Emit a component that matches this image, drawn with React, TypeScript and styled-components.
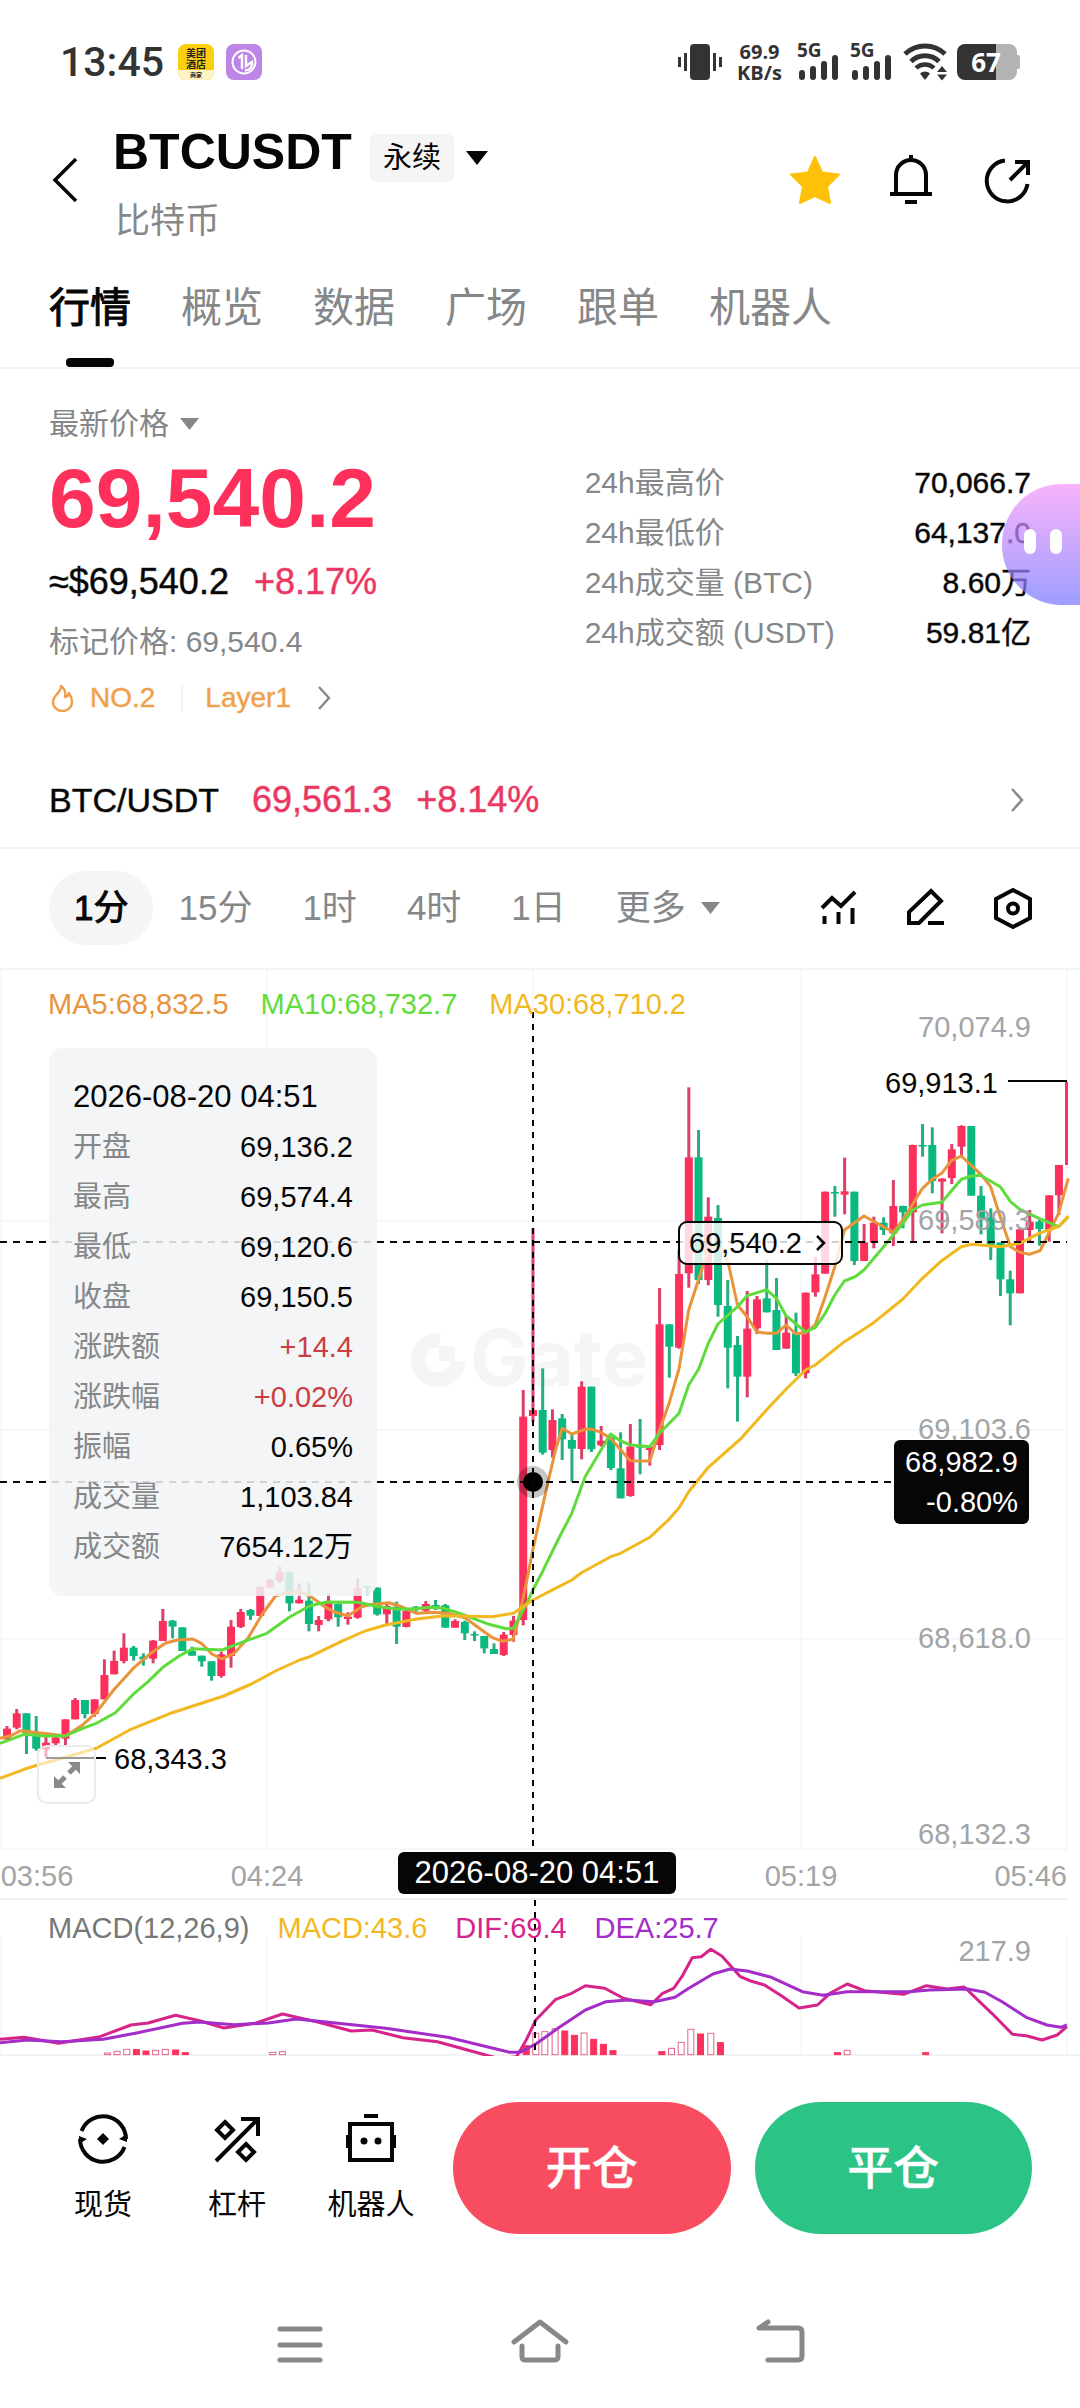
import React from "react";
import styled, { createGlobalStyle } from "styled-components";

const color = {
  ink: "#060606",
  muted: "#858789",
  axis: "#a2a4a6",
  line: "#f4f5f6",
  up: "#fb305c",
  upText: "#ea3762",
  down: "#09b97f",
  orange: "#f0a04b",
  ma5: "#e9933a",
  ma10: "#5fdc3c",
  ma30: "#f2b81f",
  dif: "#d6248a",
  dea: "#a42cc8",
};

// a medium weight, between the regular and bold faces of the font
const mediumStroke = "-webkit-text-stroke: 1px color-mix(in srgb, currentColor 45%, transparent);";

const GlobalStyle = createGlobalStyle`
  * { box-sizing: border-box; }
  body { margin: 0; background: #fff; }
  button { border: 0; padding: 0; margin: 0; background: none; color: inherit; font: inherit; cursor: pointer; }
  svg { display: block; }
`;

const Page = styled.div`
  font-family: "Liberation Sans", "Noto Sans CJK SC", sans-serif;
  color: ${color.ink};
  background: #fff;
`;

/* ---------- status bar ---------- */
const StatusBar = styled.div`
  display: flex;
  align-items: center;
  justify-content: space-between;
  padding: 38px 60px 0 60px;
  height: 86px;
  color: #333;
`;
const StatusGroup = styled.div<{ $gap: number }>`
  display: flex;
  align-items: center;
  gap: ${(p) => p.$gap}px;
`;
const Clock = styled.time`
  font: 500 41px/48px Roboto, sans-serif;
  margin-right: 2px;
`;
const NetSpeed = styled.div`
  display: flex;
  flex-direction: column;
  align-items: center;
  font: 700 20px/21px "Open Sans", sans-serif;
`;

/* ---------- header ---------- */
const Header = styled.header`
  display: flex;
  align-items: center;
  padding: 36px 46px 0 49px;
`;
const BackButton = styled.button`
  width: 32px;
  margin-right: 32px;
`;
const TitleBlock = styled.div`
  flex: 1;
`;
const TitleRow = styled.div`
  display: flex;
  align-items: flex-end;
`;
const Title = styled.h1`
  margin: 0 18px 0 0;
  font-size: 50px;
  line-height: 60px;
  font-weight: 700;
`;
const ContractTag = styled.span`
  padding: 0 13px;
  margin-right: 12px;
  border-radius: 6px;
  background: #f5f5f5;
  font-size: 29px;
  line-height: 48px;
`;
const Subtitle = styled.div`
  margin: 20px 0 0 2px;
  font-size: 35px;
  line-height: 38px;
  color: ${color.muted};
`;
const HeaderActions = styled.div`
  display: flex;
  gap: 42px;
`;

/* ---------- tabs ---------- */
const Tabs = styled.nav`
  display: flex;
  gap: 50px;
  padding: 43px 49px 0;
  border-bottom: 2px solid ${color.line};
`;
const Tab = styled.button<{ $active?: boolean }>`
  position: relative;
  padding-bottom: 34px;
  font-size: 41px;
  line-height: 50px;
  color: ${(p) => (p.$active ? color.ink : color.muted)};
  ${(p) => (p.$active ? "-webkit-text-stroke: 1px currentColor;" : "")}
  &::after {
    content: "";
    display: ${(p) => (p.$active ? "block" : "none")};
    position: absolute;
    left: calc(50% - 24px);
    bottom: 0;
    width: 48px;
    height: 9px;
    border-radius: 4px;
    background: ${color.ink};
  }
`;

/* ---------- price summary ---------- */
const Summary = styled.section`
  position: relative;
  display: grid;
  grid-template-columns: 6fr 5fr;
  padding: 30px 49px 0;
`;
const PriceColumn = styled.div`
  display: flex;
  flex-direction: column;
  align-items: flex-start;
`;
const PriceKind = styled.button`
  display: flex;
  align-items: center;
  gap: 11px;
  font-size: 30px;
  line-height: 50px;
  color: ${color.muted};
`;
const LastPrice = styled.div`
  font-size: 84px;
  line-height: 98px;
  font-weight: 700;
  color: #fd2f5b;
`;
const Medium = styled.span<{ $size: number; $tone?: string }>`
  display: block;
  font-size: ${(p) => p.$size}px;
  color: ${(p) => p.$tone || color.ink};
  ${mediumStroke}
`;
const FiatRow = styled.div`
  display: flex;
  gap: 25px;
  line-height: 70px;
`;
const MarkPrice = styled.div`
  font-size: 30px;
  line-height: 50px;
  color: ${color.muted};
`;
const Badges = styled.div`
  display: flex;
  align-items: center;
  line-height: 62px;
`;
const BadgeLink = styled.a`
  display: flex;
  align-items: center;
  gap: 13px;
  color: inherit;
  text-decoration: none;
`;
const BadgeDivider = styled.span`
  width: 2px;
  height: 28px;
  margin: 0 22px 0 26px;
  background: ${color.line};
`;
const Stats = styled.dl`
  margin: 0;
  padding-top: 59px;
`;
const StatRow = styled.div`
  display: flex;
  justify-content: space-between;
  font-size: 30px;
  line-height: 50px;
`;
const StatLabel = styled.dt`
  color: ${color.muted};
`;
const StatValue = styled.dd`
  margin: 0;
`;
const Assistant = styled.button`
  position: absolute;
  right: 0;
  top: 115px;
  width: 78px;
  height: 121px;
  display: flex;
  align-items: center;
  gap: 14px;
  padding: 0 0 6px 22px;
  border-radius: 60px 0 0 60px;
  background: linear-gradient(rgba(245, 150, 250, 0.72), rgba(120, 120, 255, 0.72));
`;
const Eye = styled.span`
  width: 12px;
  height: 25px;
  border-radius: 6px;
  background: #fff;
`;

const SpotLink = styled.a`
  display: flex;
  align-items: center;
  padding: 48px 56px 24px 49px;
  border-bottom: 2px solid ${color.line};
  line-height: 46px;
  color: inherit;
  text-decoration: none;
`;
const SpotName = styled.span`
  margin-right: 33px;
`;
const SpotPrice = styled.span`
  margin-right: 24px;
`;
const Spacer = styled.span`
  flex: 1;
`;

/* ---------- interval bar ---------- */
const IntervalBar = styled.div`
  display: flex;
  align-items: center;
  justify-content: space-between;
  padding: 22px 45px 23px 49px;
  border-bottom: 2px solid ${color.line};
`;
const Intervals = styled.div`
  display: flex;
`;
const Interval = styled.button<{ $active?: boolean }>`
  display: flex;
  align-items: center;
  gap: 15px;
  padding: 0 25px;
  border-radius: 37px;
  font-size: 35px;
  line-height: 74px;
  color: ${(p) => (p.$active ? color.ink : color.muted)};
  background: ${(p) => (p.$active ? "#f5f5f5" : "transparent")};
  ${(p) => (p.$active ? "-webkit-text-stroke: 1px currentColor;" : "")}
`;
const ChartTools = styled.div`
  display: flex;
  gap: 43px;
`;

/* ---------- chart ---------- */
const Chart = styled.section`
  position: relative;
`;
const ChartSvg = styled.svg`
  width: 100%;
  height: auto;
  font-family: "Liberation Sans", sans-serif;
  font-size: 29px;
`;
const Legend = styled.div<{ $top: number; $gap: number }>`
  position: absolute;
  top: ${(p) => p.$top}px;
  left: 48px;
  display: flex;
  gap: ${(p) => p.$gap}px;
  font-size: 29px;
  line-height: 34px;
`;
const LegendItem = styled.span<{ $tone: string }>`
  color: ${(p) => p.$tone};
`;
const Tooltip = styled.dl`
  position: absolute;
  top: 78px;
  left: 49px;
  width: 328px;
  margin: 0;
  padding: 24px;
  border-radius: 14px;
  background: rgba(241, 243, 245, 0.86);
  font-size: 29px;
  line-height: 50px;
`;
const TooltipDate = styled.div`
  font-size: 31px;
`;
const TooltipRow = styled.div`
  display: flex;
  justify-content: space-between;
`;
const TooltipLabel = styled.dt`
  color: ${color.muted};
`;
const TooltipValue = styled.dd<{ $rise?: boolean }>`
  margin: 0;
  color: ${(p) => (p.$rise ? "#cb3d42" : color.ink)};
`;
const PriceTag = styled.button`
  position: absolute;
  top: 251px;
  left: 678px;
  height: 44px;
  display: flex;
  align-items: center;
  gap: 14px;
  padding: 0 15px 0 9px;
  border: 2px solid ${color.ink};
  border-radius: 9px;
  background: rgba(255, 255, 255, 0.82);
  font-size: 29px;
`;
const CrossPrice = styled.div`
  position: absolute;
  top: 470px;
  right: 51px;
  padding: 2px 11px;
  border-radius: 6px;
  background: ${color.ink};
  color: #fff;
  font-size: 29px;
  line-height: 40px;
  text-align: right;
`;
const CrossTime = styled.div`
  position: absolute;
  top: 882px;
  left: 398px;
  width: 278px;
  border-radius: 6px;
  background: ${color.ink};
  color: #fff;
  font-size: 31px;
  line-height: 42px;
  text-align: center;
`;
const ExpandButton = styled.button`
  position: absolute;
  top: 775px;
  left: 37px;
  width: 59px;
  height: 59px;
  display: grid;
  place-items: center;
  border: 2px solid #ebebeb;
  border-radius: 10px;
  background: rgba(255, 255, 255, 0.6);
`;

/* ---------- bottom ---------- */
const ActionBar = styled.footer`
  display: flex;
  align-items: center;
  padding: 46px 48px 0 36px;
`;
const Shortcut = styled.button`
  width: 134px;
  display: flex;
  flex-direction: column;
  align-items: center;
  gap: 20px;
  font-size: 29px;
  line-height: 38px;
`;
const TradeButtons = styled.div`
  flex: 1;
  display: flex;
  gap: 24px;
  margin-left: 15px;
`;
const TradeButton = styled.button<{ $bg: string }>`
  flex: 1;
  border-radius: 66px;
  background: ${(p) => p.$bg};
  color: #fff;
  font-size: 46px;
  line-height: 132px;
  font-weight: 500;
  ${mediumStroke}
`;
const SystemNav = styled.nav`
  display: flex;
  justify-content: center;
  gap: 180px;
  padding: 81px 0 33px;
`;

/* ---------- icons ---------- */
const Caret = ({ w, h, box = h, fill }: { w: number; h: number; box?: number; fill: string }) => (
  <svg width={w} height={box} viewBox={`0 ${-(box - h) / 2} ${w} ${box}`}>
    <path d={`M0 0H${w}L${w / 2} ${h}Z`} fill={fill} />
  </svg>
);
const ChevronRight = () => (
  <svg width="14" height="24" viewBox="0 0 14 24" fill="none" stroke={color.muted} strokeWidth="2.4">
    <path d="M2 1L12 12L2 23" />
  </svg>
);
const SignalIcon = () => (
  <svg width="43" height="54" viewBox="0 -8 43 54" fill="#333">
    <text x="0" y="14" fontFamily="Open Sans, sans-serif" fontWeight="700" fontSize="19">5G</text>
    <rect x="2" y="27" width="6" height="10" rx="3" />
    <rect x="13" y="23" width="6" height="14" rx="3" />
    <rect x="24" y="18" width="6" height="19" rx="3" />
    <rect x="35" y="12" width="6" height="25" rx="3" />
  </svg>
);

/* ---------- chart data ---------- */
type Point = [number, number];
type Block = { x: number; y: number; kx: number; pts: Point[] };
const KA = 1 / 2.904;
const KB = 1 / 2.703;
const toPath = (blocks: Block[]) =>
  blocks
    .flatMap((b) => b.pts.map(([px, py]) => `${(b.x + px * b.kx).toFixed(1)} ${(b.y + py / 3).toFixed(1)}`))
    .map((s, i) => (i ? "L" : "M") + s)
    .join("");

const MA5 = toPath([
  { x: 0, y: 1500, kx: KA, pts: [[0,715],[30,708],[60,692],[100,697],[150,703],[190,708],[240,675],[280,637],[330,570],[390,502],[440,458],[480,430],[515,420],[560,417],[585,430],[615,462],[645,477],[680,460],[720,415],[760,345],[800,288],[830,278],[870,275],[900,288],[940,318],[970,335],[1010,348],[1050,320],[1080,313],[1130,308],[1160,318],[1210,340],[1260,337],[1300,340],[1350,353],[1390,383],[1430,413],[1460,424],[1490,418],[1505,360],[1530,240]] },
  { x: 500, y: 1050, kx: KB, pts: [[89,1498],[115,1370],[131,1290],[150,1200],[168,1135],[194,1152],[230,1138],[250,1138],[275,1148],[299,1165],[352,1232],[405,1233],[431,1140],[457,1060],[484,955],[510,780],[545,660],[565,590],[600,600],[617,640],[642,765],[668,800],[694,845],[720,850],[747,850],[773,825],[799,851],[826,848],[852,825],[879,740],[905,650],[931,540],[984,498],[1063,547],[1089,510],[1142,415],[1168,388],[1194,370],[1220,332],[1247,318],[1300,373],[1326,410],[1352,500],[1380,590],[1405,607],[1431,613],[1460,602],[1510,490],[1536,385]] },
]);
const MA10 = toPath([
  { x: 0, y: 1500, kx: KA, pts: [[0,730],[70,703],[130,708],[190,708],[240,685],[280,670],[335,638],[390,580],[430,545],[475,500],[520,468],[560,446],[645,450],[700,428],[775,400],[840,352],[900,317],[950,306],[1040,307],[1100,320],[1150,327],[1200,327],[1250,322],[1290,325],[1340,342],[1420,373],[1470,386],[1491,385],[1530,310]] },
  { x: 500, y: 1400, kx: KB, pts: [[89,570],[115,515],[150,435]] },
  { x: 500, y: 1050, kx: KB, pts: [[168,1445],[194,1390],[230,1280],[299,1152],[325,1172],[352,1185],[405,1190],[431,1150],[484,1090],[510,1005],[537,957],[563,880],[589,822],[642,770],[668,737],[720,719],[747,745],[773,797],[826,846],[852,833],[879,790],[905,735],[931,693],[960,680],[984,660],[1037,590],[1089,520],[1115,480],[1142,465],[1194,457],[1247,388],[1275,378],[1299,376],[1352,410],[1380,455],[1405,478],[1457,505],[1510,530],[1536,500]] },
]);
const MA30 = toPath([
  { x: 0, y: 1500, kx: KA, pts: [[0,835],[70,808],[110,795],[170,778],[280,745],[380,688],[500,638],[650,588],[730,552],[800,513],[870,480],[900,470],[990,425],[1060,393],[1120,375],[1210,357],[1290,347],[1430,350],[1491,340]] },
  { x: 500, y: 1400, kx: KB, pts: [[89,600],[150,565],[194,540],[220,518],[299,470],[326,460],[405,412],[457,358],[484,323],[510,275],[563,202],[650,117]] },
  { x: 500, y: 1050, kx: KB, pts: [[720,1080],[773,1018],[826,960],[852,945],[931,875],[1010,818],[1089,747],[1142,685],[1194,632],[1247,590],[1275,583],[1352,590],[1405,580],[1457,550],[1510,530],[1536,498]] },
]);
const KM = 1 / 1.4519;
const DIF = toPath([{ x: 0, y: 1880, kx: KM, pts: [[0,478],[35,472],[85,490],[145,470],[190,435],[215,429],[255,406],[290,422],[325,444],[370,430],[410,402],[460,425],[510,453],[540,450],[585,473],[635,485],[700,522],[725,536],[750,530],[764,480],[778,420],[807,358],[830,340],[850,317],[878,325],[905,355],[945,374],[962,340],[978,325],[990,290],[1005,233],[1018,230],[1032,208],[1048,228],[1075,290],[1090,303],[1110,315],[1135,348],[1160,384],[1187,375],[1205,340],[1230,312],[1255,332],[1312,343],[1345,317],[1375,327],[1400,321],[1440,400],[1470,463],[1490,467],[1513,480],[1535,465],[1549,440]] }]);
const DEA = toPath([{ x: 0, y: 1880, kx: KM, pts: [[0,488],[40,480],[90,485],[150,478],[200,458],[265,430],[290,426],[340,434],[390,429],[430,417],[470,425],[560,445],[650,472],[740,517],[755,517],[778,492],[810,445],[850,390],[880,365],[910,360],[950,365],[980,352],[1000,325],[1035,282],[1060,267],[1085,273],[1120,292],[1165,335],[1195,346],[1230,335],[1320,335],[1350,330],[1405,327],[1430,337],[1455,365],[1490,412],[1520,435],[1540,442],[1549,435]] }]);

// [rising, high, body top, body bottom, low]
type Candle = [0 | 1, number, number, number, number];
const earlyCandles: Candle[] = [
  [1,678,686,718,720],[1,627,640,683,688],[0,640,640,700,762],[0,648,700,746,752],[1,705,728,748,772],[1,708,712,730,740],
  [1,658,658,716,735],[1,594,600,658,658],[0,600,600,642,655],[1,598,598,642,650],[1,478,525,598,598],[1,452,483,523,523],
  [1,400,443,483,490],[0,438,443,468,482],[0,460,470,478,497],[1,420,422,476,490],[1,327,363,423,423],[0,360,362,380,415],
  [0,382,382,453,453],[0,440,453,467,467],[0,467,467,484,500],[0,484,484,528,542],[1,455,463,528,533],[1,360,380,468,503],
  [1,327,336,381,384],[0,327,330,347,360],[1,260,260,348,348],[1,237,240,262,265],[1,200,217,242,250],[0,215,217,310,334],
  [1,250,299,310,310],[0,248,302,372,394],[1,348,360,375,394],[1,280,308,358,364],[0,310,312,352,380],[1,337,350,357,374],
  [1,235,265,353,356],[0,258,258,264,286],[0,262,263,343,347],[1,310,318,343,372],[0,305,320,380,432],[1,327,332,381,382],
  [0,318,320,330,335],[1,303,312,332,340],[0,300,315,325,330],[0,312,316,383,383],[1,358,363,383,383],[0,362,366,400,420],
  [0,394,402,405,423],[0,408,408,445,460],[0,430,447,462,462],[1,396,404,465,468],[1,348,362,405,425],
];
const lateCandles: Candle[] = [
  [1,1020,1100,1710,1726],[1,535,1080,1098,1115],[0,955,1080,1208,1214],[1,1078,1110,1200,1223],[0,1092,1105,1168,1230],
  [0,1150,1170,1196,1296],[1,994,1010,1197,1228],[0,1010,1010,1198,1206],[1,1128,1172,1186,1190],[0,1160,1162,1254,1260],
  [0,1147,1255,1345,1345],[1,1122,1190,1338,1340],[0,1107,1188,1193,1273],[1,1188,1190,1200,1247],[1,714,823,1185,1200],
  [0,823,823,890,983],[1,600,672,893,896],[1,112,322,670,713],[0,240,322,690,702],[1,442,500,690,706],[0,465,504,765,800],
  [0,690,768,893,1015],[0,858,885,980,1115],[1,723,836,980,1042],[1,738,748,835,852],[0,630,745,787,787],[0,684,780,900,900],
  [1,797,848,896,896],[0,788,850,970,978],[1,728,728,970,985],[1,620,673,727,740],[1,425,425,671,671],[0,408,426,430,500],
  [1,323,424,434,493],[0,425,425,633,645],[1,522,577,633,633],[1,500,518,577,595],[0,502,518,540,555],[1,390,468,550,588],
  [0,467,468,487,535],[1,284,285,487,575],[0,222,285,289,320],[0,232,285,393,430],[1,385,386,395,550],[1,282,298,384,402],
  [1,226,228,290,318],[0,228,228,437,437],[0,408,437,505,553],[0,475,503,590,630],[0,577,577,688,738],[0,662,688,730,826],
  [1,535,538,730,730],[1,480,515,540,577],[0,510,515,537,587],[1,436,436,540,575],[1,345,345,436,495],
];
const candles = [
  ...earlyCandles.map((c) => ({ c, y0: 1500 })),
  ...lateCandles.map((c) => ({ c, y0: 1050 })),
];
const candleX = (i: number) => 7 + i * 9.74;

// [x, top, solid]
const macdBars: [number, number, 0 | 1][] = [
  [156,519,0],[170,514,0],[184,508,0],[198,509,1],[212,513,1],[226,511,0],[240,508,0],[255,510,1],[269,518,1],
  [396,517,0],[410,515,0],[764,497,1],[778,460,0],[791,455,0],[806,446,0],[820,453,1],[834,466,1],[848,459,0],
  [862,478,1],[876,493,1],[890,512,1],[961,515,1],[975,505,0],[989,487,0],[1003,448,0],[1017,462,1],[1032,460,0],
  [1046,488,1],[1216,518,1],[1230,511,0],[1344,518,1],
];

const axisPrices: [string, number][] = [
  ["70,074.9", 1037], ["69,589.3", 1230], ["69,103.6", 1439], ["68,618.0", 1648], ["68,132.3", 1844],
];

const CandleChart = () => (
  <ChartSvg viewBox="0 970 1080 1086" role="img" aria-label="BTCUSDT K线图">
    <g stroke="#f7f8f8" strokeWidth="2">
      {[1, 267, 533, 801, 1067].map((x) => (
        <path key={x} d={`M${x} 970V1849M${x} 1936V2054`} />
      ))}
      {[1221, 1430, 1639, 1849].map((y) => (
        <path key={y} d={`M0 ${y}H1068`} />
      ))}
      <path d="M0 1899H1068M0 2055H1080" stroke="#f1f2f3" />
    </g>

    <g fill="#f4f6f6">
      <path d="M440 1340A20 20 0 1 0 458 1361" fill="none" stroke="#f4f6f6" strokeWidth="15" />
      <rect x="439" y="1346" width="16" height="15" />
      <text x="470" y="1386" fontFamily="Inter, sans-serif" fontWeight="700" fontSize="78">Gate</text>
    </g>

    <g>
      {candles.map(({ c: [rise, hi, top, bot, lo], y0 }, i) => (
        <g key={i} fill={rise ? color.up : color.down}>
          <rect x={candleX(i) - 1.5} y={y0 + hi / 3} width="3" height={(lo - hi) / 3} fill={rise ? "#dc4068" : "#27ad80"} />
          <rect x={candleX(i) - 4} y={y0 + top / 3} width="8" height={Math.max((bot - top) / 3, 1.5)} />
        </g>
      ))}
      <rect x="1065" y="1082" width="3" height="83" fill={color.up} />
    </g>

    <g fill="none" strokeWidth="3" strokeLinejoin="round">
      <path d={MA5} stroke={color.ma5} />
      <path d={MA10} stroke={color.ma10} />
      <path d={MA30} stroke={color.ma30} />
    </g>

    <g fill={color.axis} textAnchor="end">
      {axisPrices.map(([t, y]) => (
        <text key={t} x="1031" y={y}>{t}</text>
      ))}
      <text x="1067" y="1886">05:46</text>
      <text x="1031" y="1961">217.9</text>
    </g>
    <g fill={color.axis} textAnchor="middle">
      <text x="37" y="1886">03:56</text>
      <text x="267" y="1886">04:24</text>
      <text x="801" y="1886">05:19</text>
    </g>

    <g fill={color.ink}>
      <text x="885" y="1093">69,913.1</text>
      <text x="114" y="1769">68,343.3</text>
      <path d="M1008 1081H1067M46 1758H106" stroke={color.ink} strokeWidth="2" />
    </g>

    <g>
      {macdBars.map(([x, top, solid]) => (
        <rect
          key={x}
          x={x * KM - 3}
          y={1880 + top / 3}
          width="6"
          height={(524 - top) / 3}
          fill={solid ? color.up : "#fff"}
          stroke={solid ? color.up : "#e0668a"}
          strokeWidth="1"
        />
      ))}
    </g>
    <g fill="none" strokeWidth="3" strokeLinejoin="round">
      <path d={DIF} stroke={color.dif} />
      <path d={DEA} stroke={color.dea} />
    </g>

    <circle cx="533" cy="1482" r="16" fill="#000" fillOpacity="0.22" />
    <circle cx="533" cy="1482" r="10" fill="#000" />
    <g stroke={color.ink} strokeWidth="2">
      <path d="M0 1242H1067" strokeDasharray="7 6" />
      <path d="M0 1482H895" strokeDasharray="7 6" />
      <path d="M533 1012V1848" strokeDasharray="6 6" />
      <path d="M535 1900V2054" strokeDasharray="6 6" />
    </g>
  </ChartSvg>
);

const tabs = ["行情", "概览", "数据", "广场", "跟单", "机器人"];
const stats = [
  ["24h最高价", "70,066.7"],
  ["24h最低价", "64,137.0"],
  ["24h成交量 (BTC)", "8.60万"],
  ["24h成交额 (USDT)", "59.81亿"],
];
const intervals = ["1分", "15分", "1时", "4时", "1日"];
const tooltipRows: [string, string, boolean?][] = [
  ["开盘", "69,136.2"],
  ["最高", "69,574.4"],
  ["最低", "69,120.6"],
  ["收盘", "69,150.5"],
  ["涨跌额", "+14.4", true],
  ["涨跌幅", "+0.02%", true],
  ["振幅", "0.65%"],
  ["成交量", "1,103.84"],
  ["成交额", "7654.12万"],
];

export default function App() {
  return (
    <Page>
      <GlobalStyle />

      <StatusBar>
        <StatusGroup $gap={12}>
          <Clock>13:45</Clock>
          <svg width="36" height="36" viewBox="0 0 36 36">
            <rect width="36" height="36" rx="8" fill="#fbd00f" />
            <path d="M0 26H36V28A8 8 0 0 1 28 36H8A8 8 0 0 1 0 28Z" fill="#fdf3c4" />
            <g fontFamily="Noto Sans CJK SC" fontWeight="700" fill="#222" textAnchor="middle">
              <text x="18" y="13" fontSize="10">美团</text>
              <text x="18" y="24" fontSize="10">酒店</text>
              <text x="18" y="33" fontSize="6">商家</text>
            </g>
          </svg>
          <svg width="36" height="36" viewBox="0 0 36 36" fill="none" stroke="#fff" strokeWidth="2.4">
            <rect width="36" height="36" rx="8" fill="#bd85e6" stroke="none" />
            <circle cx="18" cy="18" r="11.5" strokeWidth="2" />
            <path d="M12.500 14L16 11V25M20 11V22L26 18C27 23 23 27 19 26" />
          </svg>
        </StatusGroup>
        <StatusGroup $gap={15}>
          <svg width="44" height="36" viewBox="0 0 44 36" fill="#333">
            <rect x="12" y="0" width="20" height="36" rx="4" />
            <rect x="6" y="9" width="3" height="18" /><rect x="0" y="13" width="3" height="10" />
            <rect x="35" y="9" width="3" height="18" /><rect x="41" y="13" width="3" height="10" />
          </svg>
          <NetSpeed><span>69.9</span><span>KB/s</span></NetSpeed>
          <StatusGroup $gap={10}>
            <SignalIcon />
            <SignalIcon />
            <svg width="44" height="38" viewBox="0 0 44 38" fill="none" stroke="#333" strokeWidth="5">
              <path d="M2 11A29 29 0 0 1 42 11" />
              <path d="M8 18.500A20 20 0 0 1 36 18.500" />
              <path d="M13 25A13 13 0 0 1 31 25" strokeWidth="4.500" />
              <path d="M17 30.500A7 7 0 0 1 27 30.500L22 37Z" fill="#333" stroke="none" />
              <path d="M34 29H44L39 23ZM34 31.500H44L39 37.500Z" fill="#333" stroke="none" />
            </svg>
            <svg width="63" height="36" viewBox="0 0 63 36">
              <path d="M39 0H52A8 8 0 0 1 60 8V11H61A2 2 0 0 1 63 13V23A2 2 0 0 1 61 25H60V28A8 8 0 0 1 52 36H39Z" fill="#b3b3b3" />
              <path d="M8 0H39V36H8A8 8 0 0 1 0 28V8A8 8 0 0 1 8 0Z" fill="#333" />
              <text x="29" y="28" textAnchor="middle" fontFamily="Open Sans, sans-serif" fontWeight="700" fontSize="26" fill="#fff">67</text>
            </svg>
          </StatusGroup>
        </StatusGroup>
      </StatusBar>

      <Header>
        <BackButton aria-label="返回">
          <svg width="32" height="48" viewBox="0 0 32 48" fill="none" stroke={color.ink} strokeWidth="3.500">
            <path d="M27 2L6 23L27 44" />
          </svg>
        </BackButton>
        <TitleBlock>
          <TitleRow>
            <Title>BTCUSDT</Title>
            <ContractTag>永续</ContractTag>
            <button aria-label="切换合约"><Caret w={22} h={14} box={48} fill={color.ink} /></button>
          </TitleRow>
          <Subtitle>比特币</Subtitle>
        </TitleBlock>
        <HeaderActions>
          <button aria-label="收藏">
            <svg width="54" height="54" viewBox="0 0 54 54">
              <path d="M27 3L34 18.500L51 20.500L39 32.500L42 49L27 42L12 49L15 32.500L3 20.500L20 18.500Z" fill="#ffc107" stroke="#ffc107" strokeWidth="2" strokeLinejoin="round" />
            </svg>
          </button>
          <button aria-label="提醒">
            <svg width="54" height="54" viewBox="0 0 54 54" fill="none" stroke={color.ink} strokeWidth="4">
              <path d="M12 40V21A15 15 0 0 1 42 21V40M6 40H48M27 1V7M21 48H33" />
            </svg>
          </button>
          <button aria-label="分享">
            <svg width="54" height="54" viewBox="0 0 54 54" fill="none" stroke={color.ink} strokeWidth="4">
              <path d="M25 6.500A20.500 20.500 0 1 0 47.500 30M35 8H48V21M47 9L30 26" />
            </svg>
          </button>
        </HeaderActions>
      </Header>

      <Tabs>
        {tabs.map((t, i) => (
          <Tab key={t} $active={i === 0}>{t}</Tab>
        ))}
      </Tabs>

      <Summary>
        <PriceColumn>
          <PriceKind>最新价格<Caret w={19} h={12} fill={color.muted} /></PriceKind>
          <LastPrice>69,540.2</LastPrice>
          <FiatRow>
            <Medium $size={36}>≈$69,540.2</Medium>
            <Medium $size={36} $tone={color.upText}>+8.17%</Medium>
          </FiatRow>
          <MarkPrice>标记价格: 69,540.4</MarkPrice>
          <Badges>
            <BadgeLink href="#rank">
              <svg width="28" height="28" viewBox="0 0 28 28" fill="none" stroke={color.orange} strokeWidth="2.400" strokeLinejoin="round">
                <path d="M12 2C13 8 4 11 4 18A9.500 9 0 0 0 23 18C23 14 22 12 20 9C19 12 18 13 16 13C17 8 15 4 12 2Z" />
              </svg>
              <Medium $size={28} $tone={color.orange}>NO.2</Medium>
            </BadgeLink>
            <BadgeDivider />
            <BadgeLink href="#layer1">
              <Medium $size={28} $tone={color.orange}>Layer1</Medium>
              <Spacer />
              <ChevronRight />
            </BadgeLink>
          </Badges>
        </PriceColumn>
        <Stats>
          {stats.map(([k, v]) => (
            <StatRow key={k}>
              <StatLabel>{k}</StatLabel>
              <StatValue><Medium $size={30}>{v}</Medium></StatValue>
            </StatRow>
          ))}
        </Stats>
        <Assistant aria-label="智能助手"><Eye /><Eye /></Assistant>
      </Summary>

      <SpotLink href="#spot">
        <SpotName><Medium $size={34}>BTC/USDT</Medium></SpotName>
        <SpotPrice><Medium $size={36} $tone={color.upText}>69,561.3</Medium></SpotPrice>
        <Medium $size={36} $tone={color.upText}>+8.14%</Medium>
        <Spacer />
        <ChevronRight />
      </SpotLink>

      <IntervalBar>
        <Intervals>
          {intervals.map((t, i) => (
            <Interval key={t} $active={i === 0}>{t}</Interval>
          ))}
          <Interval>更多<Caret w={19} h={12} fill={color.muted} /></Interval>
        </Intervals>
        <ChartTools>
          <button aria-label="指标">
            <svg width="44" height="44" viewBox="0 0 44 44" fill="none" stroke={color.ink} strokeWidth="4">
              <path d="M5 22L15 12L24 20L38 6M7.500 30V38M21.500 26V38M35.500 22V38" />
            </svg>
          </button>
          <button aria-label="画线">
            <svg width="44" height="44" viewBox="0 0 44 44" fill="none" stroke={color.ink} strokeWidth="4">
              <path d="M5 37V26L27 5L37 15L15 37ZM24 37H40" />
            </svg>
          </button>
          <button aria-label="设置">
            <svg width="44" height="44" viewBox="0 0 44 44" fill="none" stroke={color.ink} strokeWidth="4">
              <path d="M22 4L39 13V32L22 41L5 32V13Z" /><circle cx="22" cy="22.500" r="5" />
            </svg>
          </button>
        </ChartTools>
      </IntervalBar>

      <Chart>
        <CandleChart />
        <Legend $top={17} $gap={32}>
          <LegendItem $tone={color.ma5}>MA5:68,832.5</LegendItem>
          <LegendItem $tone={color.ma10}>MA10:68,732.7</LegendItem>
          <LegendItem $tone={color.ma30}>MA30:68,710.2</LegendItem>
        </Legend>
        <Tooltip>
          <TooltipDate>2026-08-20 04:51</TooltipDate>
          {tooltipRows.map(([k, v, rise]) => (
            <TooltipRow key={k}>
              <TooltipLabel>{k}</TooltipLabel>
              <TooltipValue $rise={rise}>{v}</TooltipValue>
            </TooltipRow>
          ))}
        </Tooltip>
        <PriceTag>
          69,540.2
          <svg width="10" height="18" viewBox="0 0 10 18" fill="none" stroke={color.ink} strokeWidth="2.500">
            <path d="M1 2L8 9L1 16" />
          </svg>
        </PriceTag>
        <CrossPrice>68,982.9<br />-0.80%</CrossPrice>
        <CrossTime>2026-08-20 04:51</CrossTime>
        <ExpandButton aria-label="全屏">
          <svg width="28" height="28" viewBox="0 0 28 28" fill="#8a8a8a" stroke="#8a8a8a">
            <path d="M15 1H27V13ZM1 15V27H13Z" stroke="none" />
            <path d="M22 6L16 12M12 16L6 22" strokeWidth="5" />
          </svg>
        </ExpandButton>
        <Legend $top={941} $gap={28}>
          <LegendItem $tone="#777">MACD(12,26,9)</LegendItem>
          <LegendItem $tone={color.ma30}>MACD:43.6</LegendItem>
          <LegendItem $tone={color.dif}>DIF:69.4</LegendItem>
          <LegendItem $tone={color.dea}>DEA:25.7</LegendItem>
        </Legend>
      </Chart>

      <ActionBar>
        <Shortcut>
          <svg width="54" height="54" viewBox="0 0 54 54" fill="none" stroke={color.ink} strokeWidth="4">
            <path d="M5.500 19A23 23 0 0 1 50 27M48.500 35A23 23 0 0 1 4 27" />
            <path d="M51 22V30L43 27ZM3 32V24L11 27Z" fill={color.ink} stroke="none" />
            <path d="M27 21L33 27L27 33L21 27Z" fill={color.ink} stroke="none" />
          </svg>
          现货
        </Shortcut>
        <Shortcut>
          <svg width="54" height="54" viewBox="0 0 54 54" fill="none" stroke={color.ink} strokeWidth="4">
            <path d="M6 49L47 8M31 7H48V24M15 10L23 18L15 26L7 18ZM36 32L44 40L36 48L28 40Z" />
          </svg>
          杠杆
        </Shortcut>
        <Shortcut>
          <svg width="54" height="54" viewBox="0 0 54 54" fill="none" stroke={color.ink} strokeWidth="4">
            <path d="M6 12H48V48H6ZM20 4H34M4 23V36M50 23V36" />
            <circle cx="20" cy="29" r="3.500" fill={color.ink} stroke="none" />
            <circle cx="34" cy="29" r="3.500" fill={color.ink} stroke="none" />
          </svg>
          机器人
        </Shortcut>
        <TradeButtons>
          <TradeButton $bg="#f84c60">开仓</TradeButton>
          <TradeButton $bg="#2cc387">平仓</TradeButton>
        </TradeButtons>
      </ActionBar>

      <SystemNav>
        <button aria-label="最近任务">
          <svg width="60" height="60" viewBox="0 0 60 60" stroke="#888" strokeWidth="5" strokeLinecap="round">
            <path d="M10 14H50M10 30H50M10 45H50" />
          </svg>
        </button>
        <button aria-label="主屏幕">
          <svg width="60" height="60" viewBox="0 0 60 60" fill="none" stroke="#888" strokeWidth="5" strokeLinecap="round" strokeLinejoin="round">
            <path d="M4 27L30 7L56 27M12 31V42Q12 45 16 45H44Q48 45 48 42V31" />
          </svg>
        </button>
        <button aria-label="返回上一页">
          <svg width="60" height="60" viewBox="0 0 60 60" fill="none" stroke="#888" strokeWidth="5" strokeLinecap="round" strokeLinejoin="round">
            <path d="M18 7L9 13H48Q52 13 52 17V41Q52 45 48 45H18" />
          </svg>
        </button>
      </SystemNav>
    </Page>
  );
}
